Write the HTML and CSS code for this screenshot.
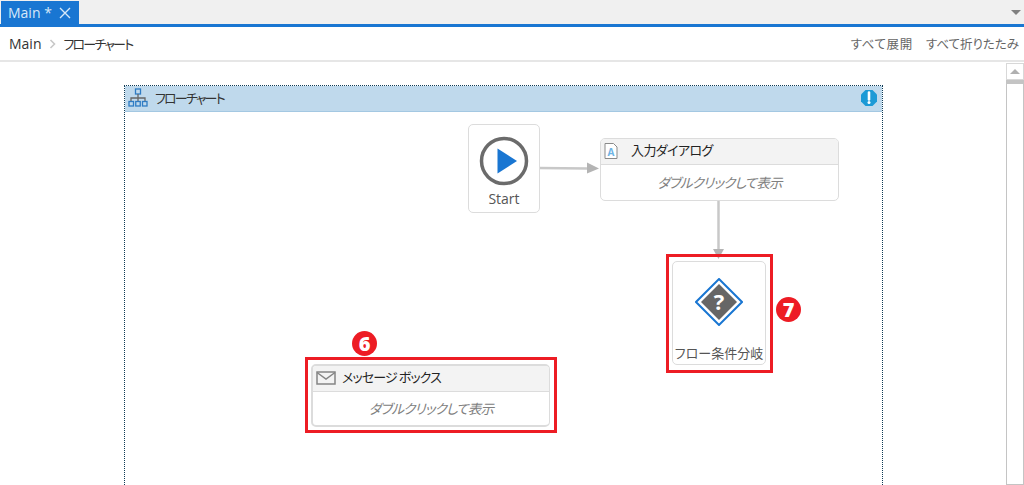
FILE: index.html
```html
<!DOCTYPE html>
<html lang="ja">
<head>
    <meta charset="UTF-8">
    <title>Main - フローチャート</title>
    <link rel="stylesheet" href="styles.css">
</head>
<body>

    <div class="tab-strip">
        <div class="tab">
            <span>Main *</span>
            <svg class="tab-close" width="12" height="12" viewBox="0 0 12 12"><path d="M1 1l10 10M11 1L1 11" stroke="#d6e8f8" stroke-width="1.4" fill="none"/></svg>
        </div>
        <div class="tab-menu"></div>
    </div>

    <div class="breadcrumb">
        <div class="crumbs">
            <span>Main</span>
            <svg width="8" height="10" viewBox="0 0 8 10"><path d="M1.5 1l4 4-4 4" stroke="#c8c8c8" stroke-width="1.6" fill="none"/></svg>
            <span class="tight-title">フローチャート</span>
        </div>
        <div class="actions">
            <span class="expand-all">すべて展開</span>
            <span>すべて折りたたみ</span>
        </div>
    </div>

    <div class="designer">
        <div class="canvas">
            <div class="flowchart">
                <div class="flowchart-header">
                    <svg width="20" height="20" viewBox="0 0 20 20" fill="none" stroke="#2f7cc4" stroke-width="1.3">
                        <rect x="7.5" y="1" width="5" height="5"/>
                        <path d="M10 6v4M3 13v-3h14v3M10 10v3" stroke="#666"/>
                        <rect x="1" y="13.500" width="4.500" height="4.500"/>
                        <rect x="7.750" y="13.500" width="4.500" height="4.500"/>
                        <rect x="14.500" y="13.500" width="4.500" height="4.500"/>
                    </svg>
                    <span class="tight-title">フローチャート</span>
                    <svg class="info-icon" width="18" height="18" viewBox="0 0 18 18">
                        <path d="M5.500 1h7L17 5.500v7L12.500 17h-7L1 12.500v-7z" fill="#1c9ad6"/>
                        <path d="M9 3.500v7" stroke="#fff" stroke-width="2.600" stroke-linecap="round"/>
                        <circle cx="9" cy="13.500" r="1.500" fill="#fff"/>
                    </svg>
                </div>

                <svg class="arrows" width="757" height="400" viewBox="0 0 757 400">
                    <path d="M414 82l48 .5" stroke="#c8c8c8" stroke-width="2.500" fill="none"/>
                    <path d="M474 82.500l-12-6v11z" fill="#b4b4b4"/>
                    <path d="M593.500 115v50" stroke="#c8c8c8" stroke-width="2.500" fill="none"/>
                    <path d="M593.500 173l-5.500-10h11z" fill="#b4b4b4"/>
                </svg>

                <div class="node start-node">
                    <svg width="50" height="50" viewBox="0 0 50 50">
                        <circle cx="25" cy="25" r="22.500" fill="#fff" stroke="#6b6b6b" stroke-width="3.500"/>
                        <path d="M18.500 12.500L38 25 18.500 37.500z" fill="#1976d2"/>
                    </svg>
                    <span>Start</span>
                </div>

                <div class="node activity input-node">
                    <div class="activity-title">
                        <svg width="14" height="16" viewBox="0 0 14 16">
                            <path d="M1 .5h8.500L13 4v11.500H1z" fill="#fff" stroke="#8a8a8a"/>
                            <text x="7" y="12.500" text-anchor="middle" class="icon-letter">A</text>
                        </svg>
                        <span class="input-title">入力ダイアログ</span>
                    </div>
                    <div class="activity-body">ダブルクリックして表示</div>
                </div>

                <div class="node decision-node">
                    <svg width="48" height="48" viewBox="0 0 48 48">
                        <path d="M24 1l23 23-23 23L1 24z" fill="#fff" stroke="#1976d2" stroke-width="2"/>
                        <path d="M24 6l18 18-18 18L6 24z" fill="#666"/>
                        <text x="24" y="32" text-anchor="middle" class="icon-mark">?</text>
                    </svg>
                    <span>フロー条件分岐</span>
                </div>

                <div class="node activity message-node">
                    <div class="activity-title">
                        <svg width="20" height="14" viewBox="0 0 20 14" fill="none" stroke="#858585" stroke-width="1.500">
                            <rect x="1" y="1" width="18" height="12"/>
                            <path d="M1 1.500l9 6.500 9-6.500"/>
                        </svg>
                        <span class="message-title">メッセージ ボックス</span>
                    </div>
                    <div class="activity-body">ダブルクリックして表示</div>
                </div>

                <div class="highlight decision-frame"></div>
                <div class="highlight message-frame"></div>
                <div class="step-badge badge-six">6</div>
                <div class="step-badge badge-seven">7</div>
            </div>
        </div>

        <div class="scrollbar">
            <div class="scroll-button"></div>
            <div class="scroll-track"></div>
        </div>
    </div>

</body>
</html>
```

FILE: styles.css
```css
* {
    margin: 0;
    padding: 0;
    box-sizing: border-box;
}

body {
    width: 1024px;
    height: 485px;
    overflow: hidden;
    background-color: #fff;
    color: #333;
    font-family: "Noto Sans CJK JP", "Open Sans", sans-serif;
    font-size: 13px;
    font-feature-settings: "palt";
    display: flex;
    flex-direction: column;
}

.tab-strip {
    height: 27px;
    padding-left: 1px;
    padding-right: 3px;
    padding-top: 1px;
    background-color: #f0f0f0;
    border-bottom: 3px solid #1976d2;
    display: flex;
    justify-content: space-between;
    align-items: center;
    flex-shrink: 0;
}

.tab {
    width: 78px;
    height: 23px;
    padding: 0 7px 0 7px;
    background-color: #1976d2;
    color: #d6e8f8;
    font-family: "Open Sans", sans-serif;
    font-size: 14px;
    display: flex;
    justify-content: space-between;
    align-items: center;
}

.tab-close {
    margin-right: 1px;
}

.tab-menu {
    width: 0;
    height: 0;
    border-left: 5px solid transparent;
    border-right: 5px solid transparent;
    border-top: 5px solid #808080;
}

.breadcrumb {
    height: 35px;
    padding: 0 5px 0 9px;
    border-bottom: 2px solid #e6e6e6;
    display: flex;
    justify-content: space-between;
    align-items: center;
    flex-shrink: 0;
}

.crumbs {
    display: flex;
    align-items: center;
    gap: 7px;
}

.crumbs span:first-child {
    font-family: "Open Sans", sans-serif;
    font-size: 14px;
}

.tight-title {
    letter-spacing: -1.8px;
}

.actions {
    display: flex;
    gap: 13px;
    font-size: 12.500px;
    color: #666;
}

.expand-all {
    letter-spacing: 0.6px;
}

.designer {
    flex: 1;
    display: flex;
    min-height: 0;
}

.canvas {
    flex: 1;
    padding: 23px 0 0 124px;
    overflow: hidden;
}

.flowchart {
    position: relative;
    width: 759px;
    height: 500px;
    border: 1px dotted #0f3a55;
}

.flowchart-header {
    height: 26px;
    padding: 0 4px 2px 3px;
    background-color: #bfd9ec;
    border-bottom: 1px solid #a4c8e2;
    display: flex;
    align-items: center;
    gap: 7px;
}

.info-icon {
    margin-left: auto;
}

.arrows {
    position: absolute;
    left: 0;
    top: 0;
}

.node {
    position: absolute;
    background-color: #fff;
    border: 1px solid #dcdcdc;
    border-radius: 5px;
}

.start-node {
    left: 343px;
    top: 38px;
    width: 72px;
    height: 89px;
    padding-top: 11px;
    font-family: "Open Sans", sans-serif;
    font-size: 14px;
    color: #555;
    display: flex;
    flex-direction: column;
    align-items: center;
    gap: 3px;
}

.decision-node {
    left: 547px;
    top: 175px;
    width: 94px;
    height: 104px;
    padding-top: 16px;
    color: #555;
    display: flex;
    flex-direction: column;
    align-items: center;
    gap: 17px;
}

.activity {
    width: 239px;
    height: 63px;
    display: flex;
    flex-direction: column;
    overflow: hidden;
}

.input-node {
    left: 475px;
    top: 52px;
}

.message-node {
    left: 186px;
    top: 278px;
    border-width: 2px 1px 2px 2px;
}

.activity-title {
    height: 26px;
    padding-left: 3px;
    padding-bottom: 5px;
    background-color: #f3f3f3;
    border-bottom: 1px solid #dcdcdc;
    color: #222;
    display: flex;
    align-items: center;
    gap: 7px;
    flex-shrink: 0;
}

.activity-title svg {
    margin-top: 4px;
}

.input-title {
    margin-left: 6px;
    letter-spacing: -0.6px;
}

.message-title {
    margin-left: -1px;
    letter-spacing: -0.9px;
}

.activity-body {
    flex: 1;
    padding-bottom: 2px;
    color: #808080;
    font-size: 13.500px;
    font-style: italic;
    letter-spacing: -0.8px;
    display: flex;
    justify-content: center;
    align-items: center;
}

.icon-letter {
    font-family: "Open Sans", sans-serif;
    font-size: 10px;
    font-weight: 700;
    fill: #6fb3e4;
}

.icon-mark {
    font-family: "Open Sans", sans-serif;
    font-size: 22px;
    font-weight: 700;
    fill: #fff;
}

.highlight {
    position: absolute;
    border: 3px solid #ed1c24;
}

.decision-frame {
    left: 541px;
    top: 168px;
    width: 107px;
    height: 119px;
}

.message-frame {
    left: 180px;
    top: 271px;
    width: 252px;
    height: 76px;
}

.step-badge {
    position: absolute;
    width: 25px;
    height: 25px;
    border-radius: 50%;
    background-color: #ed1c24;
    color: #fff;
    font-family: "Open Sans", sans-serif;
    font-size: 20px;
    font-weight: 800;
    line-height: 25px;
    text-align: center;
}

.badge-six {
    left: 227px;
    top: 245px;
}

.badge-seven {
    left: 651px;
    top: 211px;
}

.scrollbar {
    width: 18px;
    margin-top: 1px;
    flex-shrink: 0;
    display: flex;
    flex-direction: column;
}

.scroll-button {
    height: 17px;
    border: 1px solid #d8d8d8;
    background-color: #fff;
    display: flex;
    justify-content: center;
    align-items: center;
}

.scroll-button::before {
    content: "";
    border-left: 5px solid transparent;
    border-right: 5px solid transparent;
    border-bottom: 5px solid #b0b0b0;
}

.scroll-track {
    flex: 1;
    border: 1px solid #c4c4c4;
    border-top: 4px solid #c4c4c4;
    background-color: #fff;
}
```
